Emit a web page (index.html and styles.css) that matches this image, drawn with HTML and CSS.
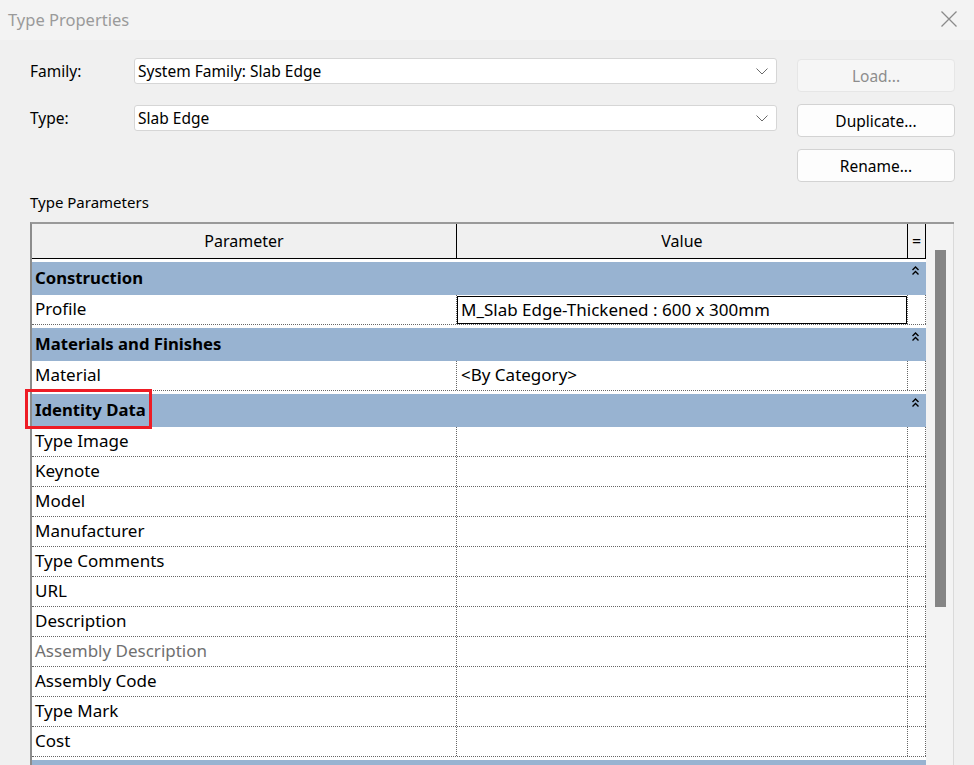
FILE: index.html
```html
<!DOCTYPE html>
<html lang="en">
<head>
    <meta charset="UTF-8">
    <meta name="viewport" content="width=device-width, initial-scale=1.0">
    <title>Type Properties</title>
    <link rel="stylesheet" href="styles.css">
</head>
<body>
    <!-- Dialog title bar -->
    <div class="titlebar">
        <span class="title">Type Properties</span>
        <svg class="close" width="16" height="16" viewBox="0 0 16 16">
            <path d="M0.5 0.5 L15.5 15.5 M15.5 0.5 L0.5 15.5" stroke="#8a8a8a" stroke-width="1.3" fill="none"/>
        </svg>
    </div>

    <!-- Family / type pickers and buttons -->
    <div class="form">
        <div class="fields">
            <div class="field">
                <label>Family:</label>
                <div class="select">
                    <span>System Family: Slab Edge</span>
                    <svg width="12" height="7" viewBox="0 0 12 7"><polyline points="0.5,0.5 6,6 11.5,0.5" stroke="#6a6a6a" fill="none"/></svg>
                </div>
            </div>
            <div class="field">
                <label>Type:</label>
                <div class="select">
                    <span>Slab Edge</span>
                    <svg width="12" height="7" viewBox="0 0 12 7"><polyline points="0.5,0.5 6,6 11.5,0.5" stroke="#6a6a6a" fill="none"/></svg>
                </div>
            </div>
        </div>
        <div class="buttons">
            <button class="btn" disabled>Load...</button>
            <button class="btn">Duplicate...</button>
            <button class="btn">Rename...</button>
        </div>
    </div>

    <div class="group-label">Type Parameters</div>

    <!-- Parameter grid -->
    <div class="sheet-frame">
        <div class="sheet">
            <div class="head">
                <div class="c-param">Parameter</div>
                <div class="c-value">Value</div>
                <div class="c-eq">=</div>
            </div>

            <div class="section">Construction
                <svg class="caret" width="7" height="9" viewBox="0 0 7 9"><path d="M0.5 4 L3.5 1 L6.5 4 M0.5 8.5 L3.5 5.5 L6.5 8.5" stroke="#000" stroke-width="1.4" fill="none"/></svg>
            </div>
            <div class="row">
                <div class="c-param">Profile</div>
                <div class="c-value"><div class="editor">M_Slab Edge-Thickened : 600 x 300mm</div></div>
                <div class="c-eq"></div>
            </div>

            <div class="section">Materials and Finishes
                <svg class="caret" width="7" height="9" viewBox="0 0 7 9"><path d="M0.5 4 L3.5 1 L6.5 4 M0.5 8.5 L3.5 5.5 L6.5 8.5" stroke="#000" stroke-width="1.4" fill="none"/></svg>
            </div>
            <div class="row">
                <div class="c-param">Material</div>
                <div class="c-value">&lt;By Category&gt;</div>
                <div class="c-eq"></div>
            </div>

            <div class="section">Identity Data
                <div class="highlight"></div>
                <svg class="caret" width="7" height="9" viewBox="0 0 7 9"><path d="M0.5 4 L3.5 1 L6.5 4 M0.5 8.5 L3.5 5.5 L6.5 8.5" stroke="#000" stroke-width="1.4" fill="none"/></svg>
            </div>
            <div class="row"><div class="c-param">Type Image</div><div class="c-value"></div><div class="c-eq"></div></div>
            <div class="row"><div class="c-param">Keynote</div><div class="c-value"></div><div class="c-eq"></div></div>
            <div class="row"><div class="c-param">Model</div><div class="c-value"></div><div class="c-eq"></div></div>
            <div class="row"><div class="c-param">Manufacturer</div><div class="c-value"></div><div class="c-eq"></div></div>
            <div class="row"><div class="c-param">Type Comments</div><div class="c-value"></div><div class="c-eq"></div></div>
            <div class="row"><div class="c-param">URL</div><div class="c-value"></div><div class="c-eq"></div></div>
            <div class="row"><div class="c-param">Description</div><div class="c-value"></div><div class="c-eq"></div></div>
            <div class="row"><div class="c-param muted">Assembly Description</div><div class="c-value"></div><div class="c-eq"></div></div>
            <div class="row"><div class="c-param">Assembly Code</div><div class="c-value"></div><div class="c-eq"></div></div>
            <div class="row"><div class="c-param">Type Mark</div><div class="c-value"></div><div class="c-eq"></div></div>
            <div class="row"><div class="c-param">Cost</div><div class="c-value"></div><div class="c-eq"></div></div>

            <div class="section"></div>
        </div>
        <div class="scrollbar"><div class="thumb"></div></div>
    </div>
</body>
</html>
```

FILE: styles.css
```css
body {
    margin: 0;
    background: #f0f0f0;
    font-family: "Noto Sans", "Open Sans", sans-serif;
    font-size: 15.5px;
    color: #000;
    height: 765px;
    overflow: hidden;
}

/* Title bar */
.titlebar {
    height: 40px;
    background: #f3f3f3;
    display: flex;
    align-items: center;
    justify-content: space-between;
    padding: 0 17px 0 8px;
}

.title {
    color: #9a9a9a;
    font-size: 16.5px;
    margin-top: -2px;
}

.close {
    margin-top: -3px;
}

/* Family / type form */
.form {
    display: flex;
    gap: 20px;
    padding: 18px 0 0 30px;
}

.fields {
    width: 747px;
    display: flex;
    flex-direction: column;
    gap: 21px;
}

.field {
    display: flex;
    align-items: center;
    height: 26px;
}

.field label {
    width: 104px;
}

.select {
    flex: 1;
    height: 26px;
    box-sizing: border-box;
    background: #fff;
    border: 1px solid #d6d6d6;
    border-radius: 3px;
    padding: 0 8px 0 3px;
    display: flex;
    align-items: center;
    justify-content: space-between;
}

.buttons {
    width: 158px;
    display: flex;
    flex-direction: column;
    gap: 12px;
    padding-top: 1px;
}

.btn {
    height: 33px;
    background: #fdfdfd;
    border: 1px solid #d3d3d3;
    border-radius: 4px;
    font: inherit;
    color: #000;
    padding: 0;
}

.btn:disabled {
    background: #f6f6f6;
    border-color: #e6e6e6;
    color: #8d8d8d;
}

.group-label {
    margin: 10px 0 10px 30px;
    line-height: 20px;
    font-size: 15px;
}

/* Parameter grid */
.sheet-frame {
    margin-left: 30px;
    width: 924px;
    box-sizing: border-box;
    border-top: 2px solid #999;
    border-left: 2px solid #8c8c8c;
    display: flex;
}

.sheet {
    width: 894px;
    background: #fff;
    font-size: 17px;
}

.head {
    display: flex;
    height: 35px;
    box-sizing: border-box;
    background: #f0f0f0;
    border-bottom: 1px solid #000;
    text-align: center;
    font-size: 16px;
}

.head > div {
    line-height: 34px;
    border-right: 1px solid #000;
}

.c-param {
    width: 425px;
    flex: none;
    box-sizing: border-box;
    padding-left: 3px;
}

.c-value {
    width: 451px;
    flex: none;
    box-sizing: border-box;
    padding-left: 4px;
}

.c-eq {
    width: 18px;
    flex: none;
    box-sizing: border-box;
}

.head .c-param,
.head .c-value,
.head .c-eq {
    padding: 0;
}

.section {
    position: relative;
    margin-top: 3px;
    height: 33px;
    box-sizing: border-box;
    background: #98b3d1;
    font-weight: bold;
    font-size: 16.7px;
    padding: 0 0 2px 3px;
    display: flex;
    align-items: center;
}

.caret {
    position: absolute;
    right: 7px;
    top: 4px;
}

.highlight {
    position: absolute;
    left: -7px;
    top: -5px;
    width: 127px;
    height: 40px;
    box-sizing: border-box;
    border: 3px solid #ee1c25;
}

.row {
    display: flex;
    height: 30px;
    box-sizing: border-box;
    border-bottom: 1px dotted #666;
}

.row > div {
    line-height: 27px;
    border-right: 1px dotted #666;
}

.muted {
    color: #707070;
}

.editor {
    margin: 1px 0 0 -4px;
    height: 28px;
    box-sizing: border-box;
    border: 1px solid #000;
    padding-left: 3px;
    line-height: 25px;
}

/* Scrollbar */
.scrollbar {
    width: 28px;
    box-sizing: border-box;
    background: #f3f3f3;
    border-right: 1px solid #dadada;
    padding: 26px 0 0 9px;
}

.thumb {
    width: 11px;
    height: 357px;
    background: #858585;
}
```
